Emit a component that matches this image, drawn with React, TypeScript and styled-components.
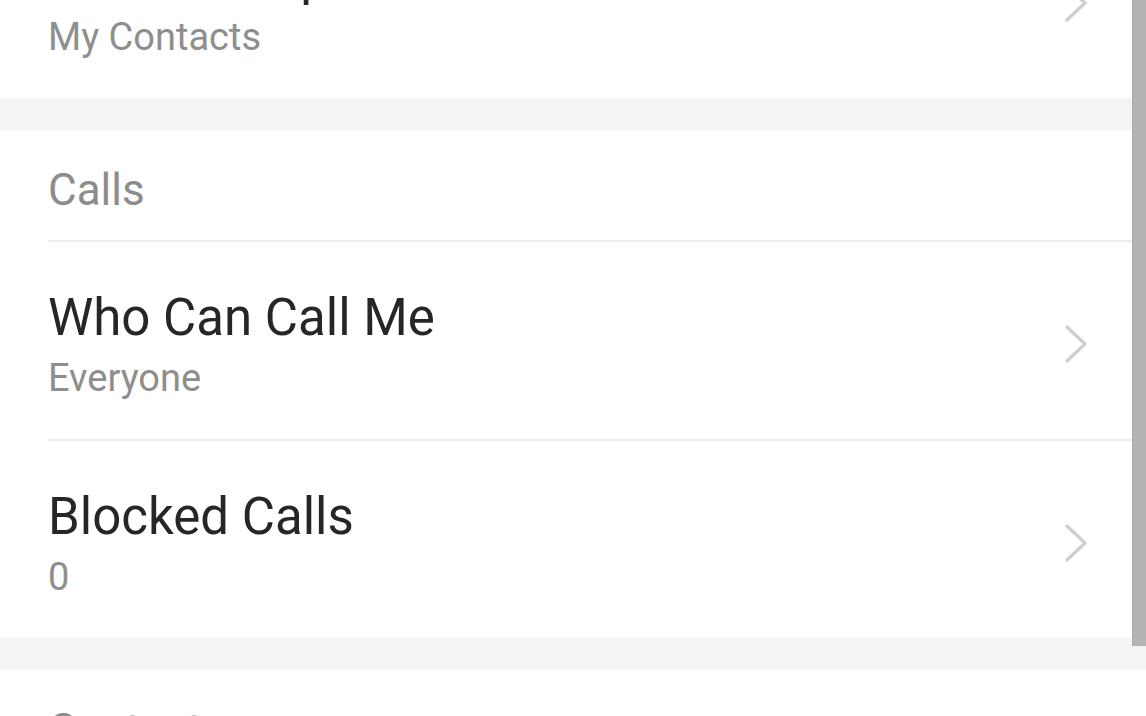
import React from 'react'
import styled, { createGlobalStyle } from 'styled-components'

const GlobalStyle = createGlobalStyle`
  html, body {
    margin: 0;
    padding: 0;
    background: #ffffff;
    font-family: Roboto, "Noto Sans", "Liberation Sans", sans-serif;
  }
`

interface RowProps {
  title: string
  value: string
}

const Chevron = () => (
  <svg width="24" height="40" viewBox="0 0 24 40">
    <polyline
      points="3,3 21,20 3,37"
      fill="none"
      stroke="#d0d0d0"
      strokeWidth="3.5"
      strokeLinecap="round"
      strokeLinejoin="round"
    />
  </svg>
)

const SettingRow: React.FC<RowProps> = ({ title, value }) => {
  return (
    <Row>
      <RowText>
        <Title>{title}</Title>
        <Value>{value}</Value>
      </RowText>
      <Chevron />
    </Row>
  )
}

const App: React.FC = () => {
  return (
    <Page>
      <GlobalStyle />
      <Scroller>
        <Section>
          <SettingRow title="Read Receipts" value="My Contacts" />
        </Section>
        <Band />
        <Section>
          <Header>Calls</Header>
          <Divider />
          <SettingRow title="Who Can Call Me" value="Everyone" />
          <Divider />
          <SettingRow title="Blocked Calls" value="0" />
        </Section>
        <Band />
        <Section>
          <Header>Contacts</Header>
        </Section>
      </Scroller>
      <ScrollThumb />
    </Page>
  )
}

const Page = styled.div`
  position: relative;
  width: 100%;
  height: 716px;
  overflow: hidden;
  background: #ffffff;
`

const Scroller = styled.div`
  margin-top: -99px;
  display: flex;
  flex-direction: column;
`

const Section = styled.section`
  background: #ffffff;
  display: flex;
  flex-direction: column;
`

const Band = styled.div`
  height: 32px;
  background: #f4f4f4;
`

const Header = styled.div`
  padding: 35px 48px 25px;
  font-size: 44px;
  line-height: 50px;
  color: #8c8c8c;
`

const Divider = styled.div`
  height: 2px;
  margin-left: 48px;
  background: #ececec;
`

const Row = styled.div`
  display: flex;
  align-items: center;
  justify-content: space-between;
  padding: 46px 58px 39px 48px;
`

const RowText = styled.div`
  display: flex;
  flex-direction: column;
  gap: 8px;
`

const Title = styled.div`
  font-size: 51px;
  line-height: 60px;
  color: #262626;
`

const Value = styled.div`
  font-size: 38px;
  line-height: 44px;
  color: #8e8e8e;
`

const ScrollThumb = styled.div`
  position: absolute;
  top: 0;
  right: 0;
  width: 13px;
  height: 646px;
  background: #b4b4b4;
  border-left: 1px solid #a9a9a9;
`

export default App
